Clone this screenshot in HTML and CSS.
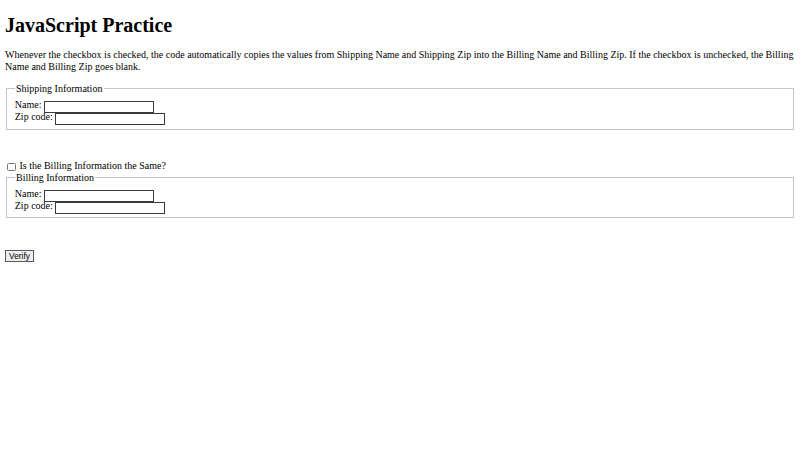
FILE: index.html
```
<!DOCTYPE html>
<html>
<head>
<meta charset="utf-8">
<title>JavaScript Practice</title>
<link rel="stylesheet" href="styles.css">
</head>
<body>
<h1 class="title">JavaScript Practice</h1>
<p class="intro">Whenever the checkbox is checked, the code automatically copies the values from Shipping Name and Shipping Zip into the Billing Name and Billing Zip. If the checkbox is unchecked, the Billing Name and Billing Zip goes blank.</p>
<fieldset class="group">
<legend class="legend">Shipping Information</legend>
<div class="row"><label class="lbl">Name:</label> <input class="field" type="text"></div>
<div class="row"><label class="lbl">Zip code:</label> <input class="field" type="text"></div>
</fieldset>
<div class="same"><input class="check" type="checkbox" id="same"> <label for="same">Is the Billing Information the Same?</label></div>
<fieldset class="group">
<legend class="legend">Billing Information</legend>
<div class="row"><label class="lbl">Name:</label> <input class="field" type="text"></div>
<div class="row"><label class="lbl">Zip code:</label> <input class="field" type="text"></div>
</fieldset>
<div class="actions"><button class="btn" type="button">Verify</button></div>
</body>
</html>
```
FILE: styles.css
```
html {
  background: #fff;
}
body {
  margin: 0 5px 5px;
  padding: 0;
  font-family: "Liberation Serif", "Times New Roman", serif;
  font-size: 10px;
  line-height: 11.5px;
  color: #000;
}
.title {
  font-size: 20px;
  line-height: 23px;
  font-weight: bold;
  margin: 13.5px 0 12.9px;
}
.intro {
  margin: 0 0 10.4px;
  line-height: 11.6px;
}
.group {
  margin: 0 1.25px;
  padding: 4.5px 7.5px 5.3px;
  border: 1.25px solid #c4c4c4;
}
.legend {
  padding: 0 1.25px;
  line-height: 11.5px;
}
.row {
  height: 12.3px;
  line-height: 12.3px;
}
.field {
  box-sizing: border-box;
  width: 110px;
  height: 12px;
  margin: -1px 0 0;
  padding: 0 1px;
  border: 1px solid #3a3a3a;
  background: #fff;
  font-family: "Liberation Sans", Arial, sans-serif;
  font-size: 8.33px;
  vertical-align: -2px;
}
.same {
  margin-top: 29.7px;
  line-height: 12px;
  height: 12px;
}
.check {
  appearance: none;
  -webkit-appearance: none;
  box-sizing: border-box;
  width: 8.5px;
  height: 8.5px;
  margin: -2px 1.5px 0 2px;
  border: 1px solid #777;
  border-radius: 1.5px;
  background: #fff;
  vertical-align: -2.5px;
}
.actions {
  display: flex;
  margin-top: 31.3px;
}
.btn {
  box-sizing: border-box;
  width: 29px;
  height: 12px;
  margin: 0;
  padding: 0;
  font-family: "Liberation Sans", Arial, sans-serif;
  font-size: 8.33px;
  line-height: 10px;
  border: 1px solid #5a5a5a;
  border-radius: 0;
  background: #efefef;
  color: #000;
}
```
